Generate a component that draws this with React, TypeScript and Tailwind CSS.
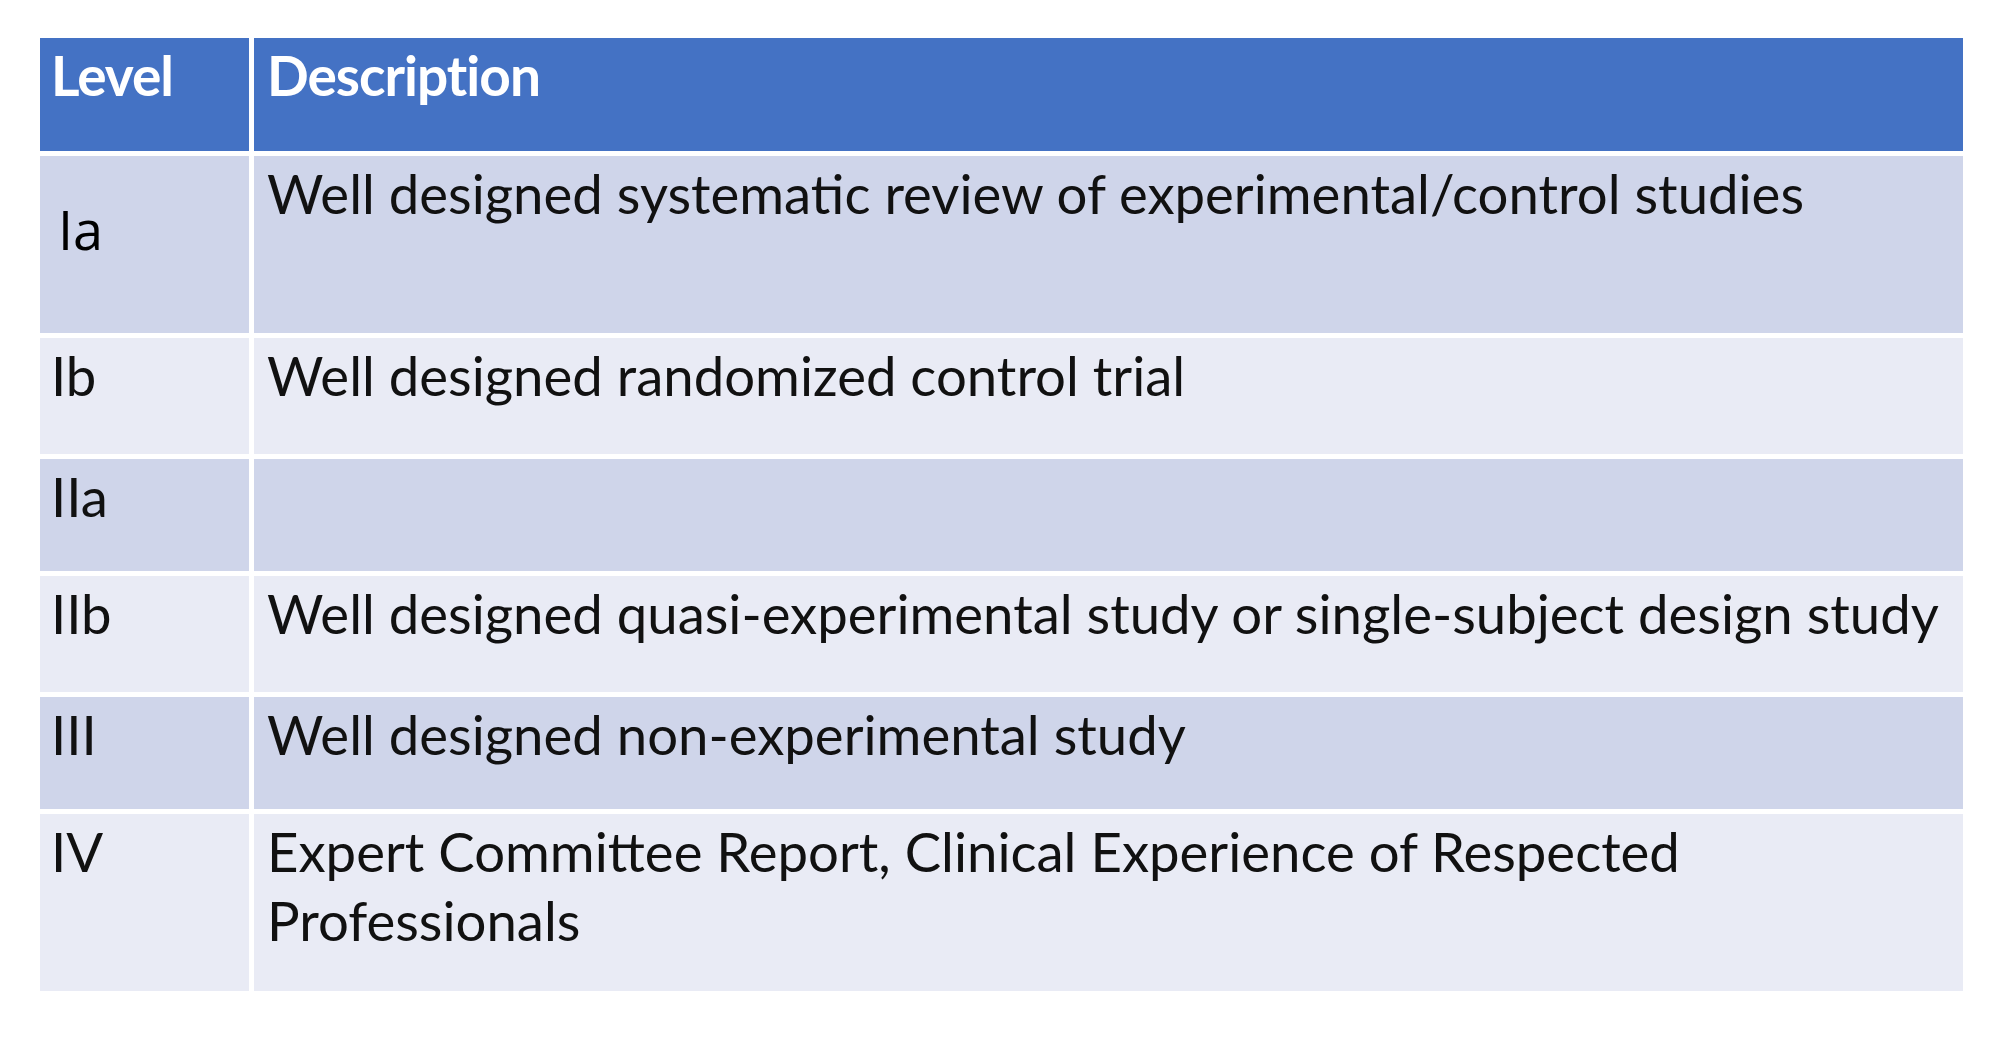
const rows: { level: string; desc: string; h: string; dark: boolean; hand?: boolean }[] = [
  { level: "Ia", desc: "Well designed systematic review of experimental/control studies", h: "h-[177px]", dark: true, hand: true },
  { level: "Ib", desc: "Well designed randomized control trial", h: "h-[116px]", dark: false },
  { level: "IIa", desc: "", h: "h-[112px]", dark: true },
  { level: "IIb", desc: "Well designed quasi-experimental study or single-subject design study", h: "h-[116px]", dark: false },
  { level: "III", desc: "Well designed non-experimental study", h: "h-[112px]", dark: true },
  { level: "IV", desc: "Expert Committee Report, Clinical Experience of Respected Professionals", h: "h-[177px]", dark: false },
];

export default function App() {
  return (
    <div className="w-[2000px] h-[1040px] bg-white pt-[38px] pl-[40px] font-['Lato',sans-serif] text-[#111]">
      <div className="w-[1923px] flex flex-col gap-[5px]">
        <div className="grid grid-cols-[209px_1fr] gap-x-[5px] h-[113px]">
          <div className="bg-[#4472c4] text-white font-bold text-[55px] leading-[60px] pl-[11px] pt-[7px] tracking-[-1px]">Level</div>
          <div className="bg-[#4472c4] text-white font-bold text-[55px] leading-[60px] pl-[13px] pt-[7px] tracking-[-1px]">Description</div>
        </div>
        {rows.map((r) => (
          <div key={r.level} className={`grid grid-cols-[209px_1fr] gap-x-[5px] ${r.h}`}>
            <div className={`${r.dark ? "bg-[#cfd5ea]" : "bg-[#e9ebf5]"} text-[54.5px] leading-[69px] pl-[11px] pt-[3px]`}>
              {r.hand ? (
                <span className="block pt-[36px] pl-[7px] font-['Open_Sans',sans-serif] text-[54px] text-black">{r.level}</span>
              ) : (
                r.level
              )}
            </div>
            <div className={`${r.dark ? "bg-[#cfd5ea]" : "bg-[#e9ebf5]"} text-[54.5px] leading-[69px] pl-[13px] pt-[3px] pr-[16px]`}>
              {r.desc}
            </div>
          </div>
        ))}
      </div>
    </div>
  );
}
